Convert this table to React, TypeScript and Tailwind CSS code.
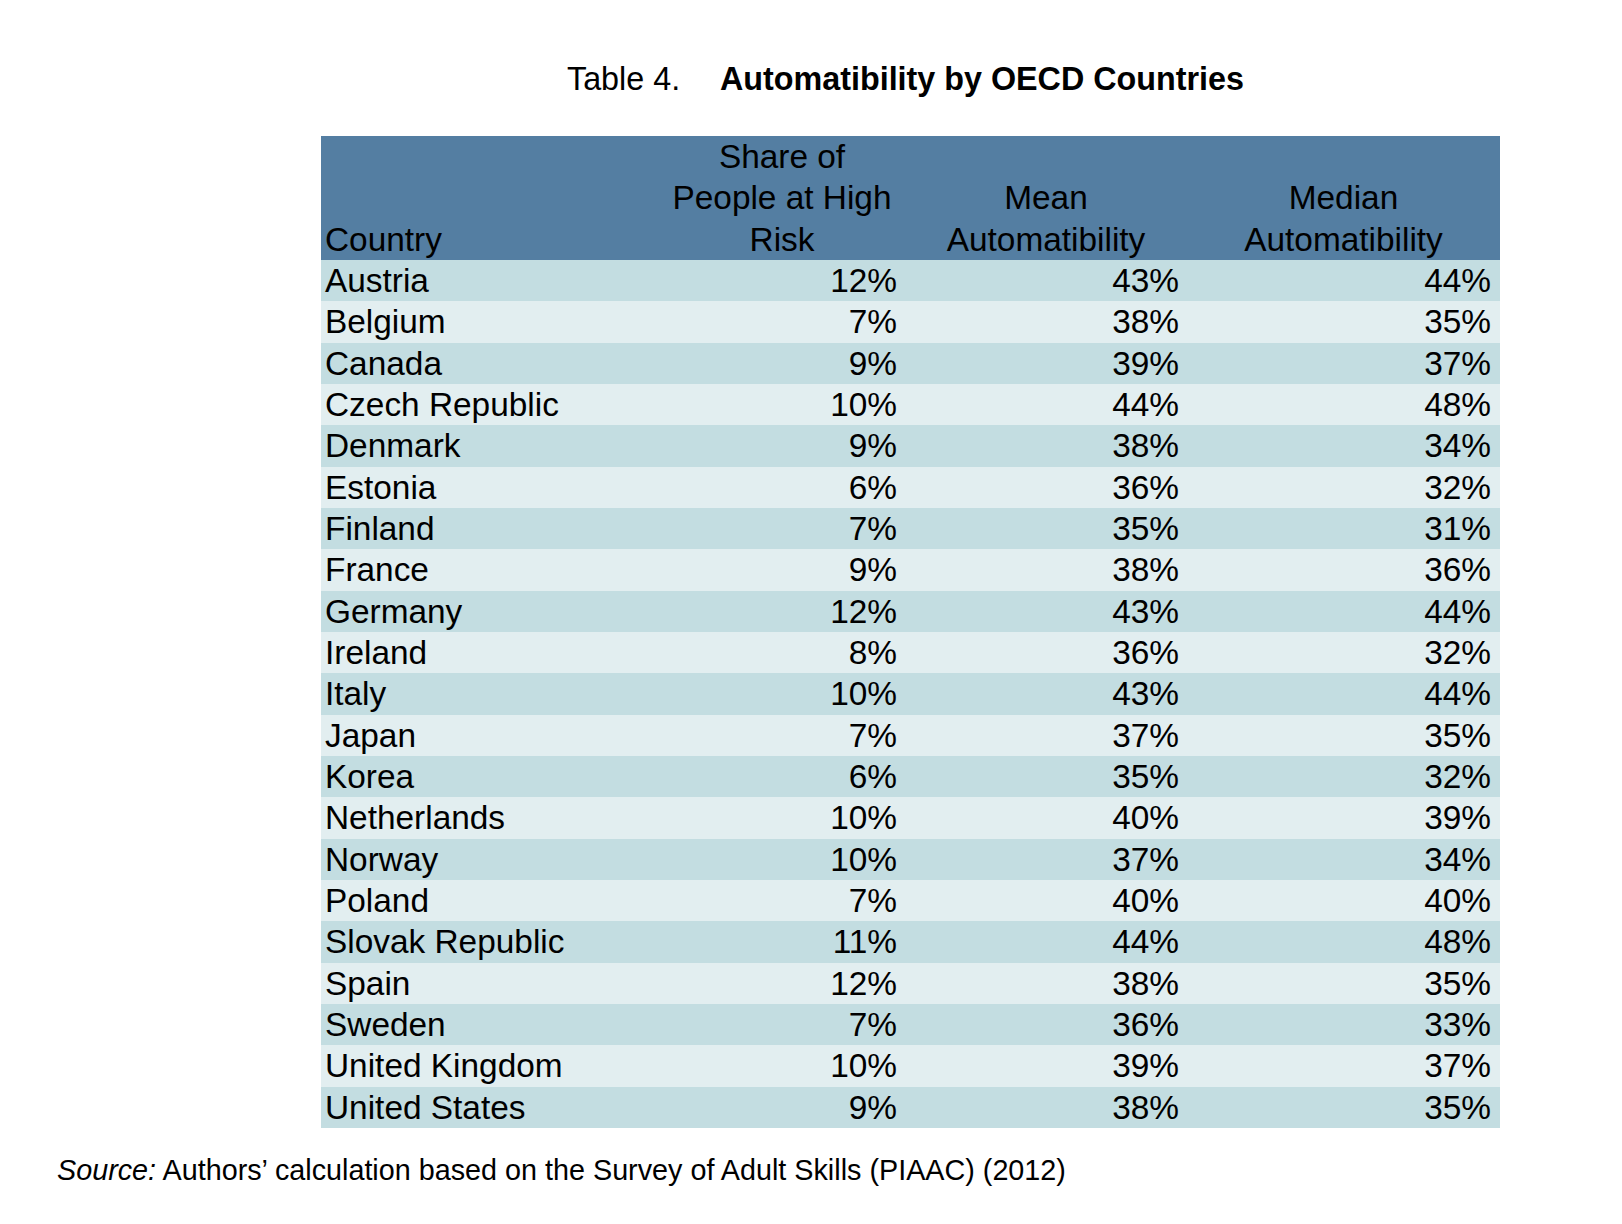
const rows: [string, string, string, string][] = [
  ["Austria", "12%", "43%", "44%"],
  ["Belgium", "7%", "38%", "35%"],
  ["Canada", "9%", "39%", "37%"],
  ["Czech Republic", "10%", "44%", "48%"],
  ["Denmark", "9%", "38%", "34%"],
  ["Estonia", "6%", "36%", "32%"],
  ["Finland", "7%", "35%", "31%"],
  ["France", "9%", "38%", "36%"],
  ["Germany", "12%", "43%", "44%"],
  ["Ireland", "8%", "36%", "32%"],
  ["Italy", "10%", "43%", "44%"],
  ["Japan", "7%", "37%", "35%"],
  ["Korea", "6%", "35%", "32%"],
  ["Netherlands", "10%", "40%", "39%"],
  ["Norway", "10%", "37%", "34%"],
  ["Poland", "7%", "40%", "40%"],
  ["Slovak Republic", "11%", "44%", "48%"],
  ["Spain", "12%", "38%", "35%"],
  ["Sweden", "7%", "36%", "33%"],
  ["United Kingdom", "10%", "39%", "37%"],
  ["United States", "9%", "38%", "35%"],
];

const cols = "grid grid-cols-[338px_246px_282px_313px]";

export default function App() {
  return (
    <div className="min-h-[1224px] w-[1622px] bg-white text-black [font-family:'Liberation_Sans',Arial,sans-serif]">
      {/* caption */}
      <div className="flex pt-[59px] pl-[567px] text-[32.3px] leading-[40px]">
        <span className="w-[153px]">Table 4.</span>
        <span className="font-bold">Automatibility by OECD Countries</span>
      </div>

      <div className="ml-[321px] mt-[37px] w-[1179px] text-[33.4px] leading-[41.33px]">
        <div className={`${cols} bg-[#547ea2]`}>
          <div className="flex h-[124px] items-end pl-[4px]">Country</div>
          <div className="flex h-[124px] items-end justify-center text-center">
            Share of
            <br />
            People at High
            <br />
            Risk
          </div>
          <div className="flex h-[124px] items-end justify-center text-center">
            Mean
            <br />
            Automatibility
          </div>
          <div className="flex h-[124px] items-end justify-center text-center">
            Median
            <br />
            Automatibility
          </div>
        </div>
        {rows.map(([country, share, mean, median], i) => (
          <div key={country} className={`${cols} ${i % 2 === 0 ? "bg-[#c3dde1]" : "bg-[#e2eef0]"}`}>
            <div className="pl-[4px]">{country}</div>
            <div className="pr-[8px] text-right">{share}</div>
            <div className="pr-[8px] text-right">{mean}</div>
            <div className="pr-[9px] text-right">{median}</div>
          </div>
        ))}
      </div>

      <p className="mt-[22px] pl-[57px] text-[28.75px] leading-[40px]">
        <span className="italic">Source:</span> Authors’ calculation based on the Survey of Adult Skills (PIAAC) (2012)
      </p>
    </div>
  );
}
